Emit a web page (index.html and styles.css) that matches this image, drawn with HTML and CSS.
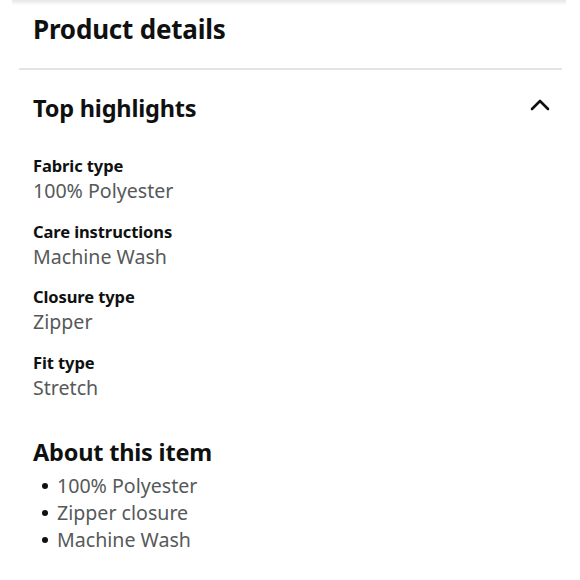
FILE: index.html
```html
<!DOCTYPE html>
<html>
<head>
<meta charset="utf-8">
<link rel="stylesheet" href="styles.css">
</head>
<body>
<div class="page">
  <div class="topshade"></div>
  <h1 class="title">Product details</h1>
  <div class="divider"></div>
  <div class="section-head">
    <h2 class="section-title">Top highlights</h2>
    <svg class="chevron" width="20" height="14" viewBox="0 0 20 14"><path d="M2 11 L10 3 L18 11" fill="none" stroke="#0f1111" stroke-width="2.6" stroke-linecap="round" stroke-linejoin="round"/></svg>
  </div>
  <div class="attrs">
    <div class="attr"><div class="label">Fabric type</div><div class="value">100% Polyester</div></div>
    <div class="attr"><div class="label">Care instructions</div><div class="value">Machine Wash</div></div>
    <div class="attr"><div class="label">Closure type</div><div class="value">Zipper</div></div>
    <div class="attr"><div class="label">Fit type</div><div class="value">Stretch</div></div>
  </div>
  <h2 class="about-title">About this item</h2>
  <ul class="bullets">
    <li>100% Polyester</li>
    <li>Zipper closure</li>
    <li>Machine Wash</li>
  </ul>
</div>
</body>
</html>
```
FILE: styles.css
```css
* { box-sizing: border-box; }
html, body { margin: 0; padding: 0; background: #fff; }
body { font-family: "Noto Sans", "Open Sans", sans-serif; color: #0f1111; width: 580px; height: 580px; overflow: hidden; }
.page { position: relative; }
.topshade { height: 5px; margin: 0 14px 0 12px; background: linear-gradient(#e6e6e6, #f6f6f6 70%, #fff); }
.title { margin: 0; padding: 7px 0 0 33px; font-size: 26px; font-weight: 700; line-height: 34px; letter-spacing: -0.2px; }
.divider { height: 2px; background: #e3e3e3; margin: 22px 18px 0 19px; }
.section-head { display: flex; align-items: center; justify-content: space-between; padding: 22px 30px 0 33px; }
.section-title { margin: 0; font-size: 23.5px; font-weight: 700; line-height: 32px; letter-spacing: -0.2px; }
.chevron { margin-top: -6px; }
.attrs { padding: 31px 0 0 33px; display: flex; flex-direction: column; gap: 16.5px; }
.label { font-size: 16.5px; font-weight: 700; line-height: 22px; letter-spacing: -0.1px; }
.value { font-size: 19.6px; color: #565959; line-height: 26px; margin-top: 1px; }
.about-title { margin: 35px 0 0 33px; font-size: 23.5px; font-weight: 700; line-height: 32px; letter-spacing: -0.2px; }
.bullets { margin: 4px 0 0 0; padding: 0 0 0 57px; list-style: none; }
.bullets li { position: relative; font-size: 19.6px; color: #565959; line-height: 27px; }
.bullets li::before { content: ""; position: absolute; left: -15px; top: 11px; width: 6px; height: 6px; border-radius: 50%; background: #0f1111; }
```
